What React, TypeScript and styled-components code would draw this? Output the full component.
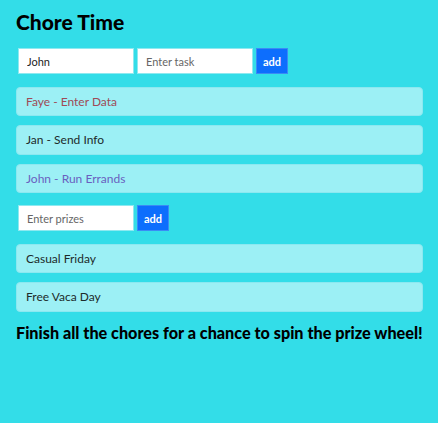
import React from "react";
import styled, { createGlobalStyle } from "styled-components";

const Global = createGlobalStyle`
  html, body { margin: 0; padding: 0; background: #33dde8; }
  body { font-family: "Lato", "Noto Sans", sans-serif; }
  * { box-sizing: border-box; }
`;

const Page = styled.div`
  padding: 10px 15px 20px 16px;
  display: flex;
  flex-direction: column;
  gap: 9px;
`;

const Title = styled.h1`
  margin: 0 0 2px 0;
  font-size: 21px;
  font-weight: 900;
  color: #000;
  line-height: 24px;
`;

const Form = styled.div`
  display: flex;
  gap: 3px;
  padding: 3px 2px 3.5px;
`;

const Input = styled.input`
  width: 116px;
  height: 26px;
  border: 1px solid #8ee9f0;
  background: #fff;
  padding: 0 8px;
  font-family: inherit;
  font-size: 11px;
  color: #222;
  outline: none;
  &::placeholder { color: #666; }
`;

const AddButton = styled.button`
  height: 26px;
  width: 32px;
  border: 1px solid #3a8bf5;
  background: #0d6efd;
  color: #fff;
  font-family: inherit;
  font-weight: 700;
  font-size: 11px;
  padding: 0;
`;

const Item = styled.div<{ $color?: string }>`
  height: 29.5px;
  display: flex;
  align-items: center;
  padding: 0 9px;
  background: #9cf0f5;
  border: 1px solid #8ce8f0;
  border-radius: 4px;
  font-size: 12px;
  color: ${(p) => p.$color || "#1c2b2b"};
`;

const Footer = styled.p`
  margin: 2px 0 0 0;
  font-size: 16.2px;
  font-weight: 900;
  color: #000;
`;

export default function App() {
  return (
    <>
      <Global />
      <Page>
        <Title>Chore Time</Title>
        <Form>
          <Input defaultValue="John" />
          <Input placeholder="Enter task" />
          <AddButton>add</AddButton>
        </Form>
        <Item $color="#a04a55">Faye - Enter Data</Item>
        <Item>Jan - Send Info</Item>
        <Item $color="#6a5fc0">John - Run Errands</Item>
        <Form>
          <Input placeholder="Enter prizes" />
          <AddButton>add</AddButton>
        </Form>
        <Item>Casual Friday</Item>
        <Item>Free Vaca Day</Item>
        <Footer>Finish all the chores for a chance to spin the prize wheel!</Footer>
      </Page>
    </>
  );
}
